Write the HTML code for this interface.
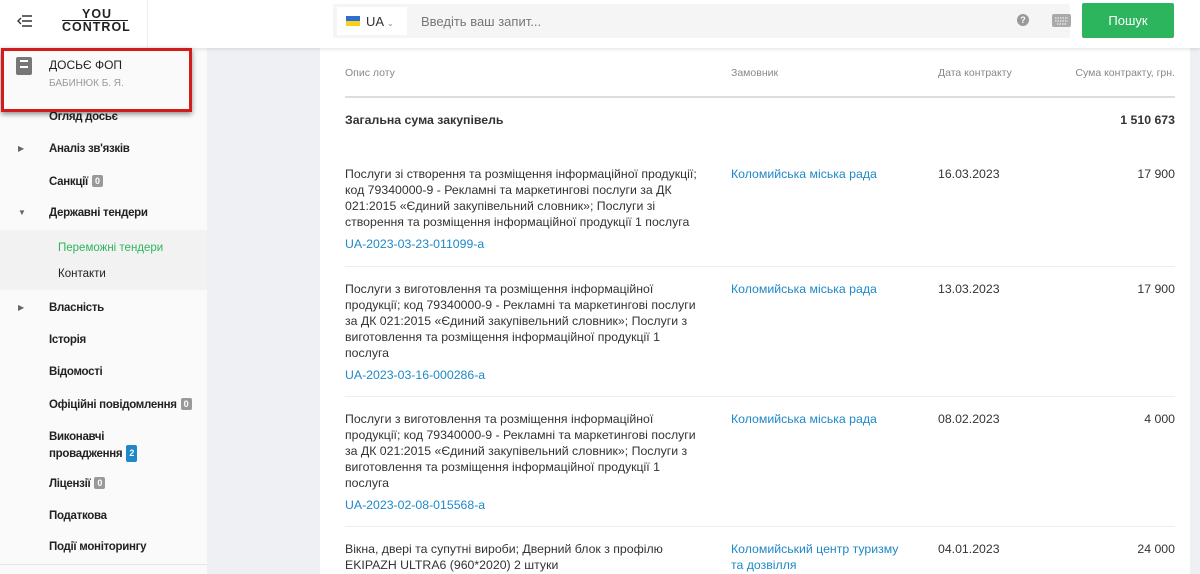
<!DOCTYPE html>
<html><head><meta charset="utf-8"><style>
*{margin:0;padding:0;box-sizing:border-box}
body{width:1200px;height:574px;overflow:hidden;font-family:"Liberation Sans",sans-serif;background:#eef0f4;position:relative;color:#333}
.a{position:absolute}
#hdr{left:0;top:0;width:1200px;height:48px;background:#fff;box-shadow:0 1px 4px rgba(0,0,0,.12);z-index:2}
#side{left:0;top:48px;width:207px;height:526px;background:#fafafa}
#main{left:320px;top:48px;width:870px;height:526px;background:#fff}
.nav{position:absolute;left:49px;font-size:11.5px;letter-spacing:-0.3px;font-weight:bold;color:#222}
.badge{display:inline-block;background:#999;color:#fff;font-size:9px;padding:1px 3px;border-radius:2px;margin-left:4px;vertical-align:1px;letter-spacing:0}
.tri{position:absolute;left:18px;font-size:8px;color:#666}
.t{position:absolute;font-size:12.3px;line-height:16px;color:#333}
.lnk{color:#1e88c8}
.h{position:absolute;font-size:10.5px;color:#888;top:67px}
.line{position:absolute;left:345px;width:830px;height:1px;background:#eee}
</style></head><body>
<div id="hdr" class="a">
 <svg class="a" style="left:17px;top:14px" width="16" height="14"><path d="M5 2h10M5 7h10M5 12h10" stroke="#333" stroke-width="1.6"/><path d="M4 4L1 7l3 3" stroke="#333" fill="none" stroke-width="1.4"/></svg>
 <div class="a" style="left:62px;top:8px;width:66px;text-align:center;font-size:12.5px;font-weight:bold;letter-spacing:1px;line-height:12px;color:#222">
  <div style="border-bottom:1.5px solid #222;padding-left:20px;text-align:left">YOU</div><div>CONTROL</div></div>
 <div class="a" style="left:147px;top:0;width:1px;height:48px;background:#eee"></div>
 <div class="a" style="left:333px;top:4px;width:737px;height:34px;background:#f5f5f5;border-radius:2px"></div>
 <div class="a" style="left:337px;top:7px;width:70px;height:28px;background:#fff"></div>
 <div class="a" style="left:346px;top:16px;width:14px;height:5px;background:#2e6fd0"></div>
 <div class="a" style="left:346px;top:21px;width:14px;height:5px;background:#f7d21c"></div>
 <div class="a" style="left:366px;top:14px;font-size:13px;color:#333">UA <span style="font-size:8px;color:#888">&#8964;</span></div>
 <div class="a" style="left:421px;top:14px;font-size:13px;color:#777">Введіть ваш запит...</div>
 <div class="a" style="left:1017px;top:14px;width:12px;height:12px;border-radius:50%;background:#999;color:#fff;font-size:9px;text-align:center;line-height:12px;font-weight:bold">?</div>
 <svg class="a" style="left:1052px;top:14px" width="19" height="13"><rect width="19" height="13" rx="2" fill="#aaa"/><path d="M3 4h13M3 7h13M5 10h9" stroke="#eee" stroke-width="1.2" stroke-dasharray="1.5 1"/></svg>
 <div class="a" style="left:1082px;top:3px;width:92px;height:35px;background:#2db55d;border-radius:2px;color:#fff;font-size:13px;text-align:center;line-height:35px">Пошук</div>
</div>
<div id="side" class="a"></div>
<div id="main" class="a"></div>
<div class="a" style="left:0;top:230px;width:207px;height:60px;background:#f2f2f2"></div>
<div class="a" style="left:1px;top:48px;width:191px;height:64px;border:3px solid #d21c1c;box-shadow:0 2px 5px rgba(0,0,0,.45);z-index:3"></div>
<div class="a" style="left:16px;top:57px;width:16px;height:18px;background:#777;border-radius:2px"></div>
<div class="a" style="left:20px;top:60px;width:8px;height:8px;border-top:2px solid #fff;border-bottom:2px solid #fff"></div>
<div class="nav" style="top:58px;font-weight:normal;font-size:12px;letter-spacing:0">ДОСЬЄ ФОП</div>
<div class="nav" style="top:78px;font-weight:normal;font-size:10px;color:#999;letter-spacing:0">БАБИНЮК Б. Я.</div>
<div class="nav" style="top:111px">Огляд досьє</div>
<div class="tri" style="top:144px">&#9654;</div><div class="nav" style="top:143px">Аналіз зв'язків</div>
<div class="nav" style="top:175px">Санкції<span class="badge">0</span></div>
<div class="tri" style="top:208px">&#9660;</div><div class="nav" style="top:207px">Державні тендери</div>
<div class="nav" style="top:242px;left:58px;font-weight:normal;color:#2db55d;letter-spacing:0">Переможні тендери</div>
<div class="nav" style="top:268px;left:58px;font-weight:normal;letter-spacing:0">Контакти</div>
<div class="tri" style="top:303px">&#9654;</div><div class="nav" style="top:302px">Власність</div>
<div class="nav" style="top:334px">Історія</div>
<div class="nav" style="top:366px">Відомості</div>
<div class="nav" style="top:398px">Офіційні повідомлення<span class="badge">0</span></div>
<div class="nav" style="top:430px;line-height:15px">Виконавчі<br>провадження<span class="badge" style="background:#1e88c8">2</span></div>
<div class="nav" style="top:477px">Ліцензії<span class="badge">0</span></div>
<div class="nav" style="top:510px">Податкова</div>
<div class="nav" style="top:541px">Події моніторингу</div>
<div class="a" style="left:0;top:564px;width:207px;height:1px;background:#e5e5e5"></div>

<div class="h" style="left:345px">Опис лоту</div>
<div class="h" style="left:731px">Замовник</div>
<div class="h" style="left:938px">Дата контракту</div>
<div class="h" style="left:1040px;width:135px;text-align:right">Сума контракту, грн.</div>
<div class="line" style="top:96px;height:2px;background:#ddd"></div>
<div class="t" style="left:345px;top:112px;font-weight:bold">Загальна сума закупівель</div>
<div class="t" style="left:1000px;width:175px;text-align:right;top:112px;font-weight:bold">1 510 673</div>

<div class="t" style="left:345px;top:166px;width:365px">Послуги зі створення та розміщення інформаційної продукції; код 79340000-9 - Рекламні та маркетингові послуги за ДК 021:2015 «Єдиний закупівельний словник»; Послуги зі створення та розміщення інформаційної продукції 1 послуга</div>
<div class="t lnk" style="left:345px;top:236px">UA-2023-03-23-011099-a</div>
<div class="t lnk" style="left:731px;top:166px">Коломийська міська рада</div>
<div class="t" style="left:938px;top:166px">16.03.2023</div>
<div class="t" style="left:1075px;width:100px;text-align:right;top:166px">17 900</div>
<div class="line" style="top:266px"></div>

<div class="t" style="left:345px;top:281px;width:356px">Послуги з виготовлення та розміщення інформаційної продукції; код 79340000-9 - Рекламні та маркетингові послуги за ДК 021:2015 «Єдиний закупівельний словник»; Послуги з виготовлення та розміщення інформаційної продукції 1 послуга</div>
<div class="t lnk" style="left:345px;top:367px">UA-2023-03-16-000286-a</div>
<div class="t lnk" style="left:731px;top:281px">Коломийська міська рада</div>
<div class="t" style="left:938px;top:281px">13.03.2023</div>
<div class="t" style="left:1075px;width:100px;text-align:right;top:281px">17 900</div>
<div class="line" style="top:396px"></div>

<div class="t" style="left:345px;top:411px;width:356px">Послуги з виготовлення та розміщення інформаційної продукції; код 79340000-9 - Рекламні та маркетингові послуги за ДК 021:2015 «Єдиний закупівельний словник»; Послуги з виготовлення та розміщення інформаційної продукції 1 послуга</div>
<div class="t lnk" style="left:345px;top:497px">UA-2023-02-08-015568-a</div>
<div class="t lnk" style="left:731px;top:411px">Коломийська міська рада</div>
<div class="t" style="left:938px;top:411px">08.02.2023</div>
<div class="t" style="left:1075px;width:100px;text-align:right;top:411px">4 000</div>
<div class="line" style="top:526px"></div>

<div class="t" style="left:345px;top:541px;width:360px">Вікна, двері та супутні вироби; Дверний блок з профілю EKIPAZH ULTRA6 (960*2020) 2 штуки</div>
<div class="t lnk" style="left:731px;top:541px;width:180px">Коломийський центр туризму та дозвілля</div>
<div class="t" style="left:938px;top:541px">04.01.2023</div>
<div class="t" style="left:1075px;width:100px;text-align:right;top:541px">24 000</div>
</body></html>
